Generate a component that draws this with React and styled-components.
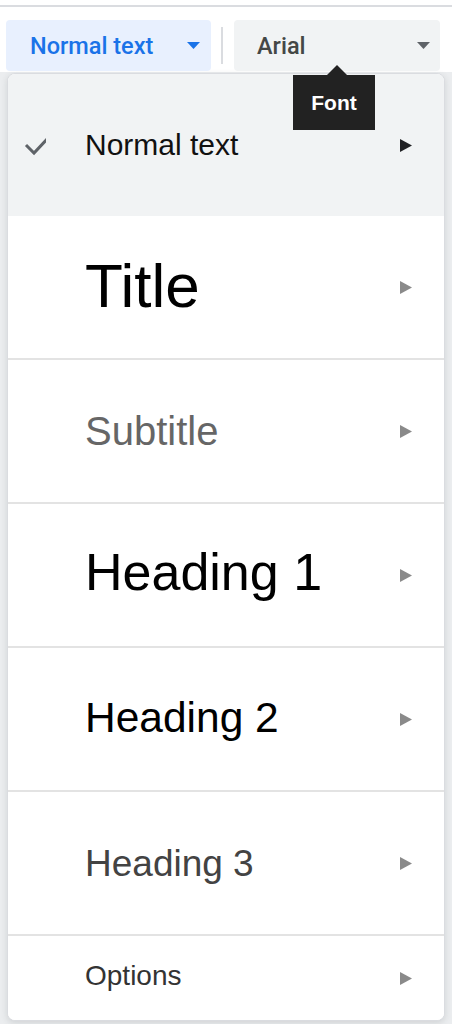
import styled, { createGlobalStyle } from 'styled-components';

const GlobalStyle = createGlobalStyle`
  html, body {
    margin: 0;
    padding: 0;
    background: #ebedef;
  }
  body {
    font-family: "Liberation Sans", Arial, sans-serif;
  }
`;

const Page = styled.div`
  min-height: 1024px;
  background: #ebedef;
  overflow: hidden;
`;

const TopBar = styled.div`
  background: #ffffff;
  padding-top: 5px;
`;

const Rule = styled.div`
  height: 2px;
  background: #dadce0;
`;

const Toolbar = styled.div`
  display: flex;
  align-items: center;
  padding: 13px 6px 1px 6px;
`;

const DropButton = styled.div`
  position: relative;
  display: flex;
  align-items: center;
  justify-content: space-between;
  box-sizing: border-box;
  width: ${(p) => p.$width}px;
  height: 51px;
  padding: 0 ${(p) => p.$right}px 0 ${(p) => p.$left}px;
  border-radius: 4px;
  background: ${(p) => (p.$active ? '#e8f0fe' : '#f1f3f4')};
  color: ${(p) => (p.$active ? '#1a73e8' : '#444746')};
  font-family: Roboto, "Liberation Sans", sans-serif;
  font-weight: 500;
  font-size: 23.5px;
`;

const Separator = styled.div`
  width: 2px;
  height: 37px;
  margin: 0 11px 0 10px;
  background: #dadce0;
`;

const Tooltip = styled.div`
  position: absolute;
  left: 59px;
  top: 55px;
  z-index: 5;
  width: 82px;
  height: 55px;
  display: flex;
  align-items: center;
  justify-content: center;
  box-sizing: border-box;
  background: #222222;
  color: #ffffff;
  font-family: "Liberation Sans", Arial, sans-serif;
  font-weight: 700;
  font-size: 21px;

  &::before {
    content: '';
    position: absolute;
    top: -10px;
    left: 34px;
    border-left: 10px solid transparent;
    border-right: 10px solid transparent;
    border-bottom: 10px solid #222222;
  }
`;

const Menu = styled.div`
  margin: 1px 7px 0 7px;
  background: #ffffff;
  border: 1px solid #dadce0;
  border-radius: 8px;
  box-shadow: 0 2px 6px rgba(60, 64, 67, 0.15);
  overflow: hidden;
`;

const Row = styled.div`
  position: relative;
  display: flex;
  align-items: center;
  justify-content: space-between;
  height: ${(p) => p.$height}px;
  padding: 0 32px 0 77px;
  background: ${(p) => (p.$selected ? '#f1f3f4' : '#ffffff')};
  border-bottom: ${(p) => (p.$divider ? '2px solid #e3e3e3' : 'none')};
`;

const Label = styled.span`
  font-family: "Liberation Sans", Arial, sans-serif;
  font-size: ${(p) => p.$size}px;
  color: ${(p) => p.$color};
  line-height: 1;
  margin-bottom: ${(p) => p.$lift || 0}px;
`;

const Check = styled.svg`
  position: absolute;
  left: 10px;
  top: 50%;
  margin-top: -12px;
`;

function Caret({ color }) {
  return (
    <svg width="13" height="7" viewBox="0 0 13 7">
      <polygon points="0,0 13,0 6.5,7" fill={color} />
    </svg>
  );
}

function SubArrow({ color }) {
  return (
    <svg width="13" height="13" viewBox="0 0 13 13">
      <polygon points="1,0 13,6.5 1,13" fill={color} />
    </svg>
  );
}

const styles = [
  { label: 'Title', size: 62, color: '#000000', lift: 2 },
  { label: 'Subtitle', size: 40, color: '#666666', lift: 0 },
  { label: 'Heading 1', size: 52, color: '#000000', lift: 6 },
  { label: 'Heading 2', size: 42.5, color: '#000000', lift: 2 },
  { label: 'Heading 3', size: 37, color: '#434343', lift: 0 },
];

export default function App() {
  return (
    <Page>
      <GlobalStyle />
      <TopBar>
        <Rule />
        <Toolbar>
          <DropButton $active $width={205} $left={24} $right={11}>
            Normal text
            <Caret color="#1a73e8" />
          </DropButton>
          <Separator />
          <DropButton $width={206} $left={23} $right={10}>
            Arial
            <Caret color="#5f6368" />
            <Tooltip>Font</Tooltip>
          </DropButton>
        </Toolbar>
      </TopBar>

      <Menu>
        <Row $selected $height={142}>
          <Check width="28" height="24" viewBox="0 0 28 24">
            <path d="M8 12 L16 20 L31 4" fill="none" stroke="#5f6368" strokeWidth="3" />
          </Check>
          <Label $size={30} $color="#111111">Normal text</Label>
          <SubArrow color="#202124" />
        </Row>
        {styles.map((s) => (
          <Row key={s.label} $divider $height={142}>
            <Label $size={s.size} $color={s.color} $lift={s.lift}>{s.label}</Label>
            <SubArrow color="#8a8a8a" />
          </Row>
        ))}
        <Row $height={84}>
          <Label $size={28} $color="#333333" $lift={4}>Options</Label>
          <SubArrow color="#8a8a8a" />
        </Row>
      </Menu>
    </Page>
  );
}
